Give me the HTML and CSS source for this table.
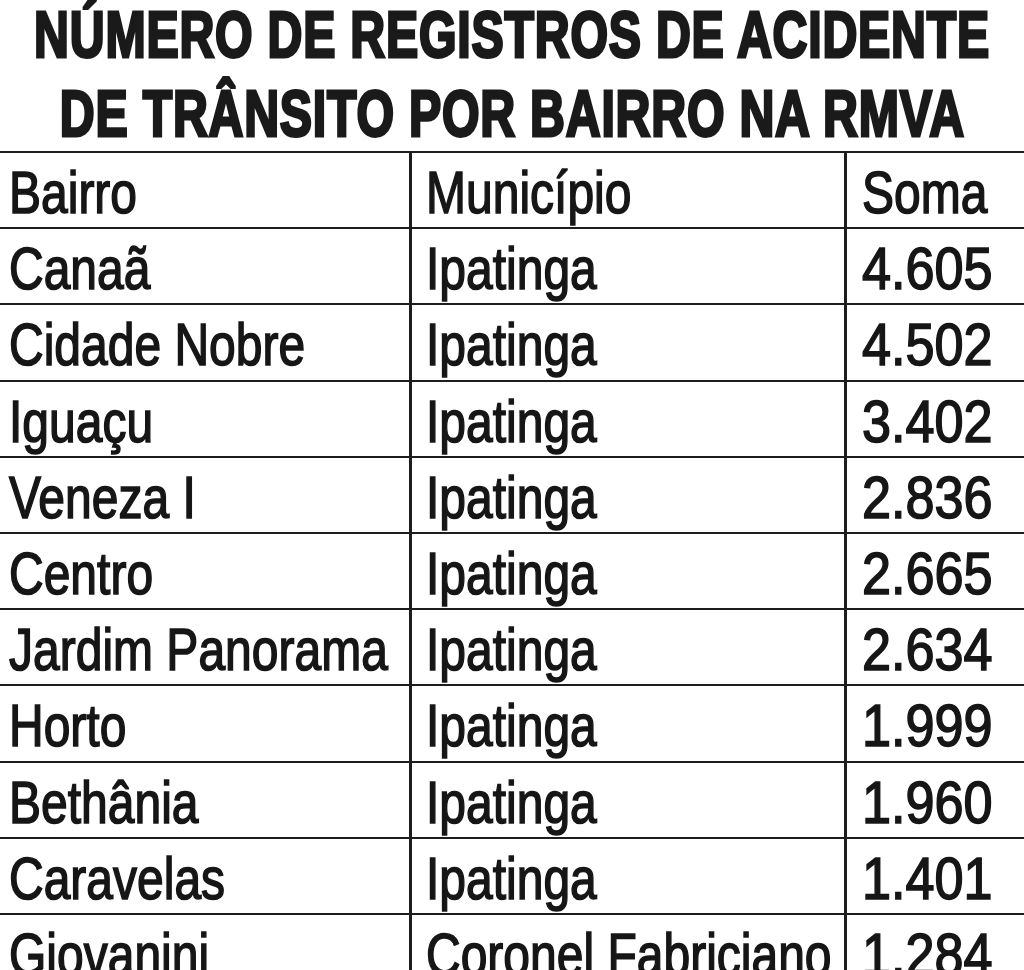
FILE: index.html
```html
<!DOCTYPE html>
<html lang="pt-BR">
<head>
<meta charset="utf-8">
<title>Número de registros de acidente de trânsito por bairro na RMVA</title>
<link rel="stylesheet" href="styles.css">
</head>
<body>
<div class="page">
  <h1 class="title">
    <span class="title-line"><span class="title-text">NÚMERO DE REGISTROS DE ACIDENTE</span></span>
    <span class="title-line"><span class="title-text">DE TRÂNSITO POR BAIRRO NA RMVA</span></span>
  </h1>
  <div class="table">
    <div class="cell c1"><span class="t">Bairro</span></div>
    <div class="cell c2"><span class="t">Município</span></div>
    <div class="cell c3"><span class="t">Soma</span></div>

    <div class="cell c1"><span class="t">Canaã</span></div>
    <div class="cell c2"><span class="t">Ipatinga</span></div>
    <div class="cell c3"><span class="t num">4.605</span></div>

    <div class="cell c1"><span class="t">Cidade Nobre</span></div>
    <div class="cell c2"><span class="t">Ipatinga</span></div>
    <div class="cell c3"><span class="t num">4.502</span></div>

    <div class="cell c1"><span class="t">Iguaçu</span></div>
    <div class="cell c2"><span class="t">Ipatinga</span></div>
    <div class="cell c3"><span class="t num">3.402</span></div>

    <div class="cell c1"><span class="t">Veneza I</span></div>
    <div class="cell c2"><span class="t">Ipatinga</span></div>
    <div class="cell c3"><span class="t num">2.836</span></div>

    <div class="cell c1"><span class="t">Centro</span></div>
    <div class="cell c2"><span class="t">Ipatinga</span></div>
    <div class="cell c3"><span class="t num">2.665</span></div>

    <div class="cell c1"><span class="t">Jardim Panorama</span></div>
    <div class="cell c2"><span class="t">Ipatinga</span></div>
    <div class="cell c3"><span class="t num">2.634</span></div>

    <div class="cell c1"><span class="t">Horto</span></div>
    <div class="cell c2"><span class="t">Ipatinga</span></div>
    <div class="cell c3"><span class="t num">1.999</span></div>

    <div class="cell c1"><span class="t">Bethânia</span></div>
    <div class="cell c2"><span class="t">Ipatinga</span></div>
    <div class="cell c3"><span class="t num">1.960</span></div>

    <div class="cell c1"><span class="t">Caravelas</span></div>
    <div class="cell c2"><span class="t">Ipatinga</span></div>
    <div class="cell c3"><span class="t num">1.401</span></div>

    <div class="cell c1"><span class="t">Giovanini</span></div>
    <div class="cell c2"><span class="t">Coronel Fabriciano</span></div>
    <div class="cell c3"><span class="t num">1.284</span></div>
  </div>
</div>
</body>
</html>
```

FILE: styles.css
```css
html, body {
  margin: 0;
  padding: 0;
  background: #ffffff;
  overflow: hidden;
}

.page {
  width: 1024px;
  height: 970px;
  overflow: hidden;
  font-family: "Liberation Sans", Arial, sans-serif;
  color: #161616;
}

.title {
  margin: -4px 0 0 0;
  height: 155px;
  display: flex;
  flex-direction: column;
  align-items: center;
  font-size: 64px;
  font-weight: bold;
  line-height: 79px;
  color: #1a1a1a;
}

.title-line {
  display: flex;
  justify-content: center;
  width: 1024px;
  white-space: nowrap;
}

.title-text {
  display: inline-block;
  transform: scaleX(0.755);
  transform-origin: 50% 50%;
  -webkit-text-stroke: 3px #1a1a1a;
  letter-spacing: 1px;
}

.table {
  display: grid;
  grid-template-columns: 409px 435px 1fr;
  grid-auto-rows: 76.2px;
  width: 1024px;
}

.cell {
  box-sizing: border-box;
  border-top: 2px solid #1d1d1d;
  padding-top: 8px;
  font-size: 60px;
  line-height: 64px;
  white-space: nowrap;
}

.c1 {
  padding-left: 9px;
}

.c2 {
  border-left: 3px solid #1d1d1d;
  padding-left: 14px;
}

.c3 {
  border-left: 3px solid #1d1d1d;
  padding-left: 15px;
}

.t {
  display: inline-block;
  transform: scaleX(0.8);
  transform-origin: 0 50%;
  -webkit-text-stroke: 1.6px #161616;
}

.t.num {
  transform: scaleX(0.87);
}
```
